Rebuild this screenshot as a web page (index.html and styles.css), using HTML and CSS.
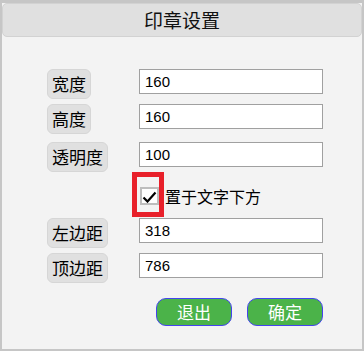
FILE: index.html
```html
<!DOCTYPE html>
<html lang="zh">
<head>
<meta charset="utf-8">
<title>印章设置</title>
<link rel="stylesheet" href="styles.css">
</head>
<body>
<div class="dialog">
  <div class="title">印章设置</div>
  <div class="form">
    <div class="row row-1"><span class="label">宽度</span><input class="field" type="text" value="160"></div>
    <div class="row row-2"><span class="label">高度</span><input class="field" type="text" value="160"></div>
    <div class="row row-3"><span class="label">透明度</span><input class="field" type="text" value="100"></div>
    <div class="check-row">
      <span class="mark"><span class="box"><svg class="tick" viewBox="0 0 15 12" width="15" height="12"><path d="M1.5 6.5 L5.5 10.5 L13.5 1.5" fill="none" stroke="#000" stroke-width="2.2"/></svg></span></span>
      <span class="check-text">置于文字下方</span>
    </div>
    <div class="row row-4"><span class="label">左边距</span><input class="field" type="text" value="318"></div>
    <div class="row row-5"><span class="label">顶边距</span><input class="field" type="text" value="786"></div>
    <div class="actions">
      <button class="btn" type="button">退出</button>
      <button class="btn" type="button">确定</button>
    </div>
  </div>
</div>
</body>
</html>
```

FILE: styles.css
```css
html, body {
  margin: 0;
  padding: 0;
  background: #f3f3f3;
}

body {
  font-family: "Noto Sans CJK SC", "Liberation Sans", sans-serif;
  color: #000;
}

.dialog {
  box-sizing: border-box;
  width: 364px;
  height: 351px;
  border: 2px solid #c6c6c6;
  border-top-width: 3px;
  background: #f3f3f3;
  overflow: hidden;
}

.title {
  box-sizing: border-box;
  height: 34px;
  background: #e0e0e0;
  border: 1px solid #d2d2d2;
  border-radius: 5px;
  text-align: center;
  font-size: 19px;
  line-height: 31px;
  color: #111;
}

.form {
  padding-left: 45px;
  display: flex;
  flex-direction: column;
}

.row {
  display: grid;
  grid-template-columns: 92px 184px;
  align-items: start;
}

.row-1 { margin-top: 32px; }
.row-2 { margin-top: 5px; }
.row-3 { margin-top: 8px; }
.row-4 { margin-top: 1px; }
.row-5 { margin-top: 5px; }

.label {
  justify-self: start;
  box-sizing: border-box;
  height: 30px;
  padding: 0 4px;
  background: #e0e0e0;
  border: 1px solid #d6d6d6;
  border-radius: 6px;
  font-size: 17px;
  line-height: 28px;
  color: #000;
}

.field {
  box-sizing: border-box;
  width: 184px;
  height: 25px;
  margin: 0;
  padding: 0 0 0 5px;
  border: 1px solid #a0a0a0;
  background: #fff;
  font-family: "Liberation Sans", sans-serif;
  font-size: 15px;
  color: #000;
  outline: none;
}

.check-row {
  display: flex;
  align-items: center;
  margin-left: 85px;
  height: 45px;
}

.mark {
  box-sizing: border-box;
  width: 32px;
  height: 45px;
  border: 5px solid #e8202a;
  display: flex;
  align-items: center;
  padding-left: 3px;
  padding-top: 2px;
}

.box {
  box-sizing: border-box;
  width: 19px;
  height: 18px;
  border: 2px solid #bdbdbd;
  background: #fff;
  display: flex;
  align-items: center;
  justify-content: center;
}

.tick {
  display: block;
  margin-top: 2px;
}

.check-text {
  font-size: 16px;
  margin-left: 1px;
  padding-top: 2px;
}

.actions {
  width: 276px;
  margin-top: 15px;
  display: flex;
  justify-content: flex-end;
  gap: 15px;
}

.btn {
  box-sizing: border-box;
  width: 76px;
  height: 28px;
  margin: 0;
  padding: 0;
  border: 1px solid #4444ee;
  border-radius: 10px;
  background: #4bb349;
  color: #fff;
  font-family: "Noto Sans CJK SC", sans-serif;
  font-size: 17px;
  line-height: 26px;
}
```
